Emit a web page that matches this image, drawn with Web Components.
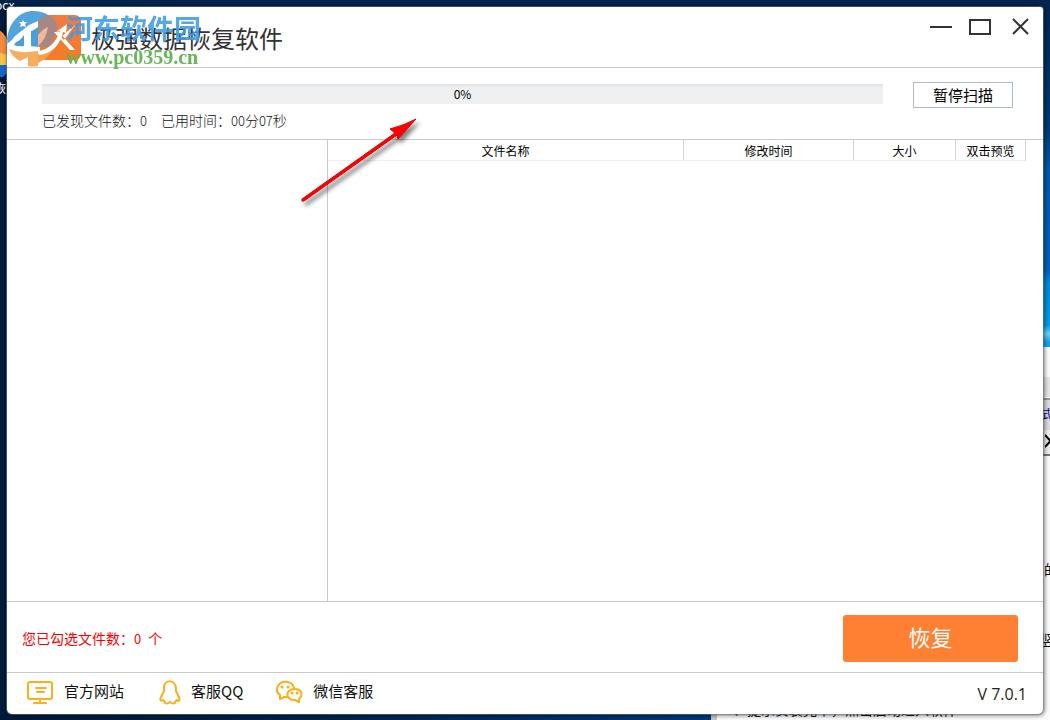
<!DOCTYPE html>
<html lang="zh-CN">
<head>
<meta charset="utf-8">
<title>极强数据恢复软件</title>
<style>
html, body { margin: 0; height: 100%; }
body { font: 14px/20px "Noto Sans CJK SC", sans-serif; color: #222; overflow: hidden; }
</style>
</head>
<body>
<desk-top>
  <app-window>
    <title-bar heading="极强数据恢复软件"></title-bar>
    <scan-bar></scan-bar>
    <result-pane></result-pane>
    <action-bar></action-bar>
    <link-bar></link-bar>
  </app-window>
</desk-top>
<script>
const define = (name, html) => {
  const template = document.createElement('template');
  template.innerHTML = html;
  customElements.define(name, class extends HTMLElement {
    constructor() {
      super();
      this.attachShadow({ mode: 'open' }).append(template.content.cloneNode(true));
    }
    connectedCallback() {
      const heading = this.shadowRoot.querySelector('[data-heading]');
      if (heading) heading.textContent = this.getAttribute('heading');
    }
  });
};

define('desk-top', `
<style>
:host { display: block; position: relative; height: 100vh; overflow: hidden; box-sizing: border-box; padding: 7px 7px 6px;
  background: linear-gradient(90deg, #001a3a 0, #02234b 30%, #003a7c 70%, #004a94); }
.top { position: absolute; inset: 0 0 auto 0; height: 7px; background: #00234b; }
.glow { position: absolute; right: 0; top: 0; width: 12px; height: 347px;
  background: linear-gradient(#00254f 0, #003a75 130px, #0058ae 170px, #0060bd 270px, #0086dc 282px, #009ce8 325px, #6fd0f5 334px, #10a5ea 342px); }
.back { position: absolute; left: 711px; right: 0; top: 347px; bottom: 0; background: #fcfcfc; border-left: 6px solid #c8c8c8; }
.strip { position: absolute; right: 0; width: 7px; }
.a { top: 377px; height: 20px; background: #e6e6e6; }
.b { top: 398px; height: 30px; background: #dcdce0; border-top: 2px solid #999; border-bottom: 1px solid #999; }
.c { top: 430px; height: 24px; background: #eee; border-bottom: 2px solid #777; }
.piece { position: absolute; white-space: nowrap; color: #111; font-size: 14px; line-height: 18px; }
.shell { position: absolute; left: -22px; top: 28px; width: 32px; height: 50px; }
slot { display: block; position: relative; height: 100%; }
</style>
<div class="top"></div><div class="glow"></div><div class="back"></div>
<div class="strip a"></div><div class="strip b"></div><div class="strip c"></div>
<span class="piece" style="left:-5px;top:-4px;color:#fff;font-size:12px">ocx</span>
<svg class="shell" viewBox="0 0 32 50"><ellipse cx="16" cy="25" rx="16" ry="24" fill="#f58a3c"/><path d="M0 27q16-6 32 1v10H0z" fill="#f6c34a"/><path d="M0 37h32q-2 8-7 12H0z" fill="#1668c7"/></svg>
<span class="piece" style="left:-6px;top:79px;color:#fff;font-size:12px">恢</span>
<span class="piece" style="left:1041px;top:405px;color:#00007a;font-size:12px">式</span>
<svg class="piece" style="left:1045px;top:434px" width="12" height="14"><path d="M0 1l11 12M11 1L0 13" stroke="#000" stroke-width="2"/></svg>
<span class="piece" style="left:1044px;top:560px">的</span>
<span class="piece" style="left:1041px;top:630px">竖</span>
<span class="piece" style="left:733px;top:700px">、提示安装完毕，点击启动进入软件</span>
<slot></slot>`);

define('app-window', `
<style>
:host { display: flex; flex-direction: column; height: 100%; background: #fff; border-radius: 3px 3px 5px 5px;
  box-shadow: 0 0 0 1px rgba(110,125,140,.55), 1px 1px 5px rgba(0,0,0,.65); position: relative; }
</style>
<slot></slot>`);

define('title-bar', `
<style>
:host { display: block; border-bottom: 1px solid #c9c9c9; position: relative; }
header { display: flex; align-items: center; height: 60px; padding: 0 10px 0 33px; }
.logo { width: 41px; height: 45px; margin-right: 10px; }
h1 { flex: 1; margin: 0; font-size: 24px; line-height: 36px; font-weight: 400; color: #333; padding-top: 2px; }
nav { display: flex; gap: 16px; align-self: flex-start; padding-top: 8px; }
button { width: 24px; height: 24px; padding: 0; border: 0; background: none; display: block; }
button svg { display: block; }
.mark { position: absolute; left: 0; top: 4px; display: flex; }
.mark svg { width: 75px; height: 56px; flex: none; }
.words { display: flex; flex-direction: column; margin-left: -16px; white-space: nowrap; }
.cn { font-size: 27px; line-height: 34px; font-weight: 700; color: #3d9be5; opacity: .88; }
.url { font: bold 20px/24px "Liberation Serif", serif; color: #5db54c; opacity: .95; }
</style>
<header>
  <svg class="logo" viewBox="0 0 41 45"><defs><linearGradient id="o" x2="0" y2="1"><stop stop-color="#ef7d43"/><stop offset="1" stop-color="#f57b27"/></linearGradient></defs><rect width="41" height="45" rx="6" fill="url(#o)"/></svg>
  <h1 data-heading></h1>
  <nav aria-label="窗口">
    <button aria-label="最小化"><svg width="24" height="24"><path d="M1 12h22" stroke="#333" stroke-width="2"/></svg></button>
    <button aria-label="最大化"><svg width="24" height="24"><rect x="1" y="5" width="20" height="14" fill="none" stroke="#333" stroke-width="2"/></svg></button>
    <button aria-label="关闭"><svg width="24" height="24"><path d="M4 4l15 15M19 4L4 19" stroke="#333" stroke-width="2"/></svg></button>
  </nav>
</header>
<div class="mark">
  <svg viewBox="0 0 75 56">
    <path d="M0 28C2 10 14 0 26 0c12 0 20 6 24 13L42 36H2q-2-3-2-8z" fill="#4a9fd8" opacity=".95"/>
    <path d="M30 11q3-4 12-7 6 5 9 13l-7 19H31z" fill="#b58478" opacity=".85"/>
    <path d="M31 36V24q6-7 10-8-2 12-9 18z" fill="#f0b79b"/>
    <path d="M1 32q4-2 7-7l14-11 9-4v8l-7 2v15l8 1v7Q12 43 1 38z" fill="#fff"/>
    <path d="M9 31q4-1 8-7v11q-6 1-10-1z" fill="#4a9fd8"/>
    <path d="M24 21l7-5v18q-3 2-7 1z" fill="#4a9fd8"/>
    <path d="M2 38q9 4 19 3v5l-8 4Q5 46 2 38z" fill="#f6ae5c"/>
    <path d="M21 41l10-1v15q-5 1-10 0z" fill="#f6ae5c"/>
    <path d="M31 43q8 1 15-6-4 10-15 15z" fill="#f8a04a"/>
    <path d="M32 40q15-3 21-20l-4 1 11-8-1 9-3-1Q51 42 32 44z" fill="#fff"/>
    <path d="M47 21h5L68 39h-5zM68 14L54 26l3 3z" fill="#fff"/>
    <path d="M16 9l1 2h3l-2 2 1 3-3-1-3 1 1-3-2-2h3z" fill="#fff"/>
  </svg>
  <div class="words"><span class="cn">河东软件园</span><span class="url">www.pc0359.cn</span></div>
</div>`);

define('scan-bar', `
<style>
:host { display: grid; grid-template-columns: 1fr 100px; column-gap: 30px; padding: 14px 30px 6px 35px; height: 51px; border-bottom: 1px solid #c9c9c9; position: relative; z-index: 1; }
.track { display: grid; height: 20px; margin-top: 2px; }
.track > * { grid-area: 1 / 1; }
progress { appearance: none; width: 100%; height: 20px; border: 0; background: #eff0f2; }
progress::-webkit-progress-bar { background: linear-gradient(#dfe0e2 0, #e9eaec 2px, #eff0f2 5px); }
progress::-webkit-progress-value { background: #ff8033; }
label { place-self: center; font: 12px/20px "Noto Sans CJK SC", sans-serif; color: #000; }
.n { font-size: 13px; }
button { height: 26px; padding: 0; border: 1px solid #b5bac1; border-right-color: #a5b9d6; background: #fff; font: 15px/22px "Noto Sans CJK SC", sans-serif; color: #000; }
p { display: flex; gap: 14px; margin: 6px 0 0; line-height: 20px; font-weight: 300; color: #111; white-space: nowrap; }
.arrow { position: absolute; left: 290px; top: 48px; width: 130px; height: 95px; filter: drop-shadow(3px 4px 2px rgba(0,0,0,.5)); pointer-events: none; }
</style>
<div>
  <div class="track"><progress id="p" max="100" value="0"></progress><label for="p">0%</label></div>
  <p><span>已发现文件数：<span class="n">0</span></span><span>已用时间：<span class="n">00</span>分<span class="n">07</span>秒</span></p>
</div>
<button>暂停扫描</button>
<svg class="arrow" viewBox="0 0 130 95"><path d="M5 83L98 17 93 13Q108 9 119 3 111 12 101 23L100 19 7 85Q4 86 5 83z" fill="#f00" stroke="#e00000" stroke-width="1"/></svg>`);

define('result-pane', `
<style>
:host { flex: 1; min-height: 0; display: grid; grid-template-columns: 320px 1fr; border-bottom: 1px solid #c9c9c9; }
section { border-left: 1px solid #c9c9c9; padding-right: 17px; }
table { width: 100%; table-layout: fixed; border-collapse: separate; border-spacing: 0; }
th { height: 18px; padding: 2px 0 0; font-size: 12px; line-height: 18px; font-weight: 400; color: #000; text-align: center; border-right: 1px solid #d4d4d4; border-bottom: 1px solid #efefef; white-space: nowrap; }
.time { width: 169px; } .size { width: 101px; } .view { width: 69px; }
</style>
<aside></aside>
<section><table><thead><tr><th>文件名称</th><th class="time">修改时间</th><th class="size">大小</th><th class="view">双击预览</th></tr></thead></table></section>`);

define('action-bar', `
<style>
:host { display: flex; align-items: center; justify-content: space-between; height: 70px; padding: 0 25px 0 15px; border-bottom: 1px solid #c9c9c9; }
p { margin: 0; padding-top: 2px; color: #f00; }
.n { font-size: 13px; margin-right: 7px; }
button { width: 175px; height: 47px; margin-top: 2px; padding: 0 0 4px; border: 0; border-radius: 3px; background: #ff8033; color: #fff; font: 22px/32px "Noto Sans CJK SC", sans-serif; }
</style>
<p>您已勾选文件数：<span class="n">0</span>个</p>
<button>恢复</button>`);

define('link-bar', `
<style>
:host { display: flex; align-items: center; height: 41px; padding: 0 16px 0 19px; font-size: 15px; line-height: 22px; }
nav { flex: 1; display: flex; gap: 32px; }
a { display: flex; align-items: center; gap: 10px; color: #111; text-decoration: none; margin-top: -5px; }
svg { height: 28px; fill: none; stroke: #ffae1a; stroke-width: 2; stroke-linecap: round; stroke-linejoin: round; }
.v { font: 16px/22px "Open Sans", sans-serif; color: #222; }
</style>
<nav>
  <a href="#site"><svg width="28" viewBox="0 0 28 28"><rect x="2" y="5" width="24" height="17" rx="2"/><path d="M14 22v4M8 26h12M10 11h10M11 15h7"/></svg>官方网站</a>
  <a href="#qq"><svg width="25" viewBox="0 0 25 28"><path d="M8 11c0-9 11-9 12 0l0 3 3 6c1 4 0 5-2 3l-2 2c1 2-3 2-5 0-2 2-6 2-5 0l-2-2c-3 2-3-1-2-3l3-6z"/></svg>客服QQ</a>
  <a href="#wechat"><svg width="28" viewBox="0 0 28 28"><path d="M19 11C17 3 6 3 3 9c-2 4-1 7 2 9v4l4-2h3"/><path d="M20 12c-11 0-9 12 0 11l4 2v-3c5-5 2-10-4-10z"/><path d="M7 10v0M13 10v0M17 16v0M22 16v0" stroke-width="3"/></svg>微信客服</a>
</nav>
<span class="v">V 7.0.1</span>`);
</script>
</body>
</html>
